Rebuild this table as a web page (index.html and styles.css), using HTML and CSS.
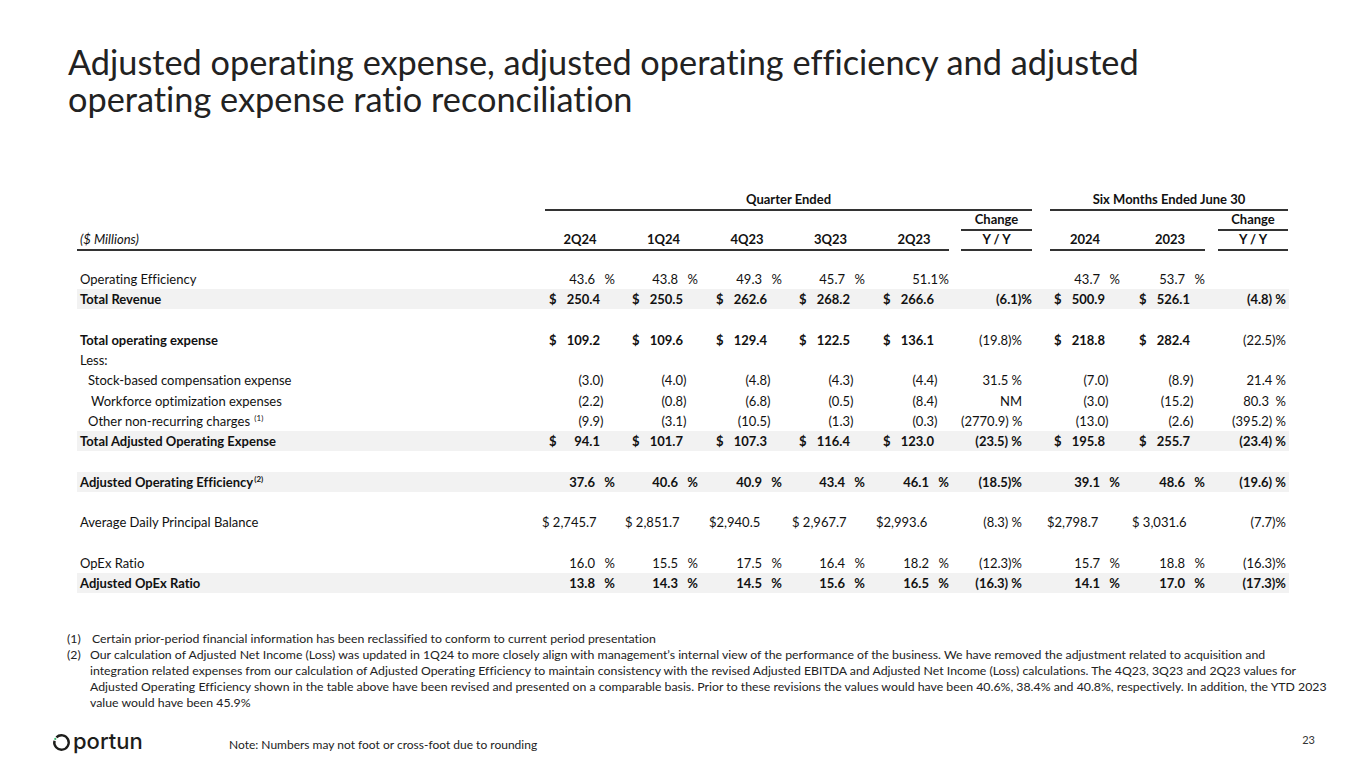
FILE: index.html
```html
<!DOCTYPE html>
<html lang="en">
<head>
<meta charset="utf-8">
<title>Adjusted operating expense reconciliation</title>
<link rel="stylesheet" href="styles.css">
</head>
<body>
<div class="slide">
  <h1 class="title">Adjusted operating expense, adjusted operating efficiency and adjusted<br>operating expense ratio reconciliation</h1>

  <div class="fin">
    <div class="row hrow">
      <div class="grp gq">Quarter Ended</div>
      <div class="grp gs">Six Months Ended June 30</div>
    </div>
    <div class="row hrow">
      <div class="chg c7">Change</div>
      <div class="chg c10">Change</div>
    </div>
    <div class="row hrow h3">
      <div class="lbl ital ulf">($ Millions)</div>
      <div class="ch ulf">2Q24</div>
      <div class="ch ulf">1Q24</div>
      <div class="ch ulf">4Q23</div>
      <div class="ch ulf">3Q23</div>
      <div class="ch"><span class="uc w70">2Q23</span></div>
      <div class="ch"><span class="uc w71">Y / Y</span></div>
      <div class="ch ulf">2024</div>
      <div class="ch"><span class="uc w70">2023</span></div>
      <div class="ch"><span class="uc w70">Y / Y</span></div>
    </div>

    <div class="body">
      <div class="row pct">
        <div class="lbl">Operating Efficiency</div>
        <div class="v"><span class="n">43.6</span><span class="s">%</span></div>
        <div class="v"><span class="n">43.8</span><span class="s">%</span></div>
        <div class="v"><span class="n">49.3</span><span class="s">%</span></div>
        <div class="v"><span class="n">45.7</span><span class="s">%</span></div>
        <div class="v"><span class="n">51.1</span><span class="s tight">%</span></div>
        <div class="y"></div>
        <div class="v"><span class="n">43.7</span><span class="s">%</span></div>
        <div class="v"><span class="n">53.7</span><span class="s">%</span></div>
        <div class="y2"></div>
      </div>
      <div class="row b sh">
        <div class="lbl">Total Revenue</div>
        <div class="v"><span class="c">$</span><span class="n">250.4</span><span class="s"></span></div>
        <div class="v"><span class="c">$</span><span class="n">250.5</span><span class="s"></span></div>
        <div class="v"><span class="c">$</span><span class="n">262.6</span><span class="s"></span></div>
        <div class="v"><span class="c">$</span><span class="n">268.2</span><span class="s"></span></div>
        <div class="v"><span class="c">$</span><span class="n">266.6</span><span class="s"></span></div>
        <div class="y wide">(6.1)%</div>
        <div class="v"><span class="c">$</span><span class="n">500.9</span><span class="s"></span></div>
        <div class="v"><span class="c">$</span><span class="n">526.1</span><span class="s"></span></div>
        <div class="y2">(4.8) %</div>
      </div>
      <div class="row"></div>
      <div class="row b">
        <div class="lbl">Total operating expense</div>
        <div class="v"><span class="c">$</span><span class="n">109.2</span><span class="s"></span></div>
        <div class="v"><span class="c">$</span><span class="n">109.6</span><span class="s"></span></div>
        <div class="v"><span class="c">$</span><span class="n">129.4</span><span class="s"></span></div>
        <div class="v"><span class="c">$</span><span class="n">122.5</span><span class="s"></span></div>
        <div class="v"><span class="c">$</span><span class="n">136.1</span><span class="s"></span></div>
        <div class="y nb">(19.8)%</div>
        <div class="v"><span class="c">$</span><span class="n">218.8</span><span class="s"></span></div>
        <div class="v"><span class="c">$</span><span class="n">282.4</span><span class="s"></span></div>
        <div class="y2 nb">(22.5)%</div>
      </div>
      <div class="row">
        <div class="lbl">Less:</div>
      </div>
      <div class="row">
        <div class="lbl ind">Stock-based compensation expense</div>
        <div class="v"><span class="n">(3.0</span><span class="s p">)</span></div>
        <div class="v"><span class="n">(4.0</span><span class="s p">)</span></div>
        <div class="v"><span class="n">(4.8</span><span class="s p">)</span></div>
        <div class="v"><span class="n">(4.3</span><span class="s p">)</span></div>
        <div class="v"><span class="n">(4.4</span><span class="s p">)</span></div>
        <div class="y">31.5 %</div>
        <div class="v"><span class="n">(7.0</span><span class="s p">)</span></div>
        <div class="v"><span class="n">(8.9</span><span class="s p">)</span></div>
        <div class="y2">21.4 %</div>
      </div>
      <div class="row">
        <div class="lbl ind2">Workforce optimization expenses</div>
        <div class="v"><span class="n">(2.2</span><span class="s p">)</span></div>
        <div class="v"><span class="n">(0.8</span><span class="s p">)</span></div>
        <div class="v"><span class="n">(6.8</span><span class="s p">)</span></div>
        <div class="v"><span class="n">(0.5</span><span class="s p">)</span></div>
        <div class="v"><span class="n">(8.4</span><span class="s p">)</span></div>
        <div class="y">NM</div>
        <div class="v"><span class="n">(3.0</span><span class="s p">)</span></div>
        <div class="v"><span class="n">(15.2</span><span class="s p">)</span></div>
        <div class="y2">80.3  %</div>
      </div>
      <div class="row">
        <div class="lbl ind">Other non-recurring charges <sup>(1)</sup></div>
        <div class="v"><span class="n">(9.9</span><span class="s p">)</span></div>
        <div class="v"><span class="n">(3.1</span><span class="s p">)</span></div>
        <div class="v"><span class="n">(10.5</span><span class="s p">)</span></div>
        <div class="v"><span class="n">(1.3</span><span class="s p">)</span></div>
        <div class="v"><span class="n">(0.3</span><span class="s p">)</span></div>
        <div class="y">(2770.9) %</div>
        <div class="v"><span class="n">(13.0</span><span class="s p">)</span></div>
        <div class="v"><span class="n">(2.6</span><span class="s p">)</span></div>
        <div class="y2">(395.2) %</div>
      </div>
      <div class="row b sh">
        <div class="lbl">Total Adjusted Operating Expense</div>
        <div class="v"><span class="c">$</span><span class="n">94.1</span><span class="s"></span></div>
        <div class="v"><span class="c">$</span><span class="n">101.7</span><span class="s"></span></div>
        <div class="v"><span class="c">$</span><span class="n">107.3</span><span class="s"></span></div>
        <div class="v"><span class="c">$</span><span class="n">116.4</span><span class="s"></span></div>
        <div class="v"><span class="c">$</span><span class="n">123.0</span><span class="s"></span></div>
        <div class="y">(23.5) %</div>
        <div class="v"><span class="c">$</span><span class="n">195.8</span><span class="s"></span></div>
        <div class="v"><span class="c">$</span><span class="n">255.7</span><span class="s"></span></div>
        <div class="y2">(23.4) %</div>
      </div>
      <div class="row"></div>
      <div class="row b sh pct">
        <div class="lbl">Adjusted Operating Efficiency<sup>(2)</sup></div>
        <div class="v"><span class="n">37.6</span><span class="s">%</span></div>
        <div class="v"><span class="n">40.6</span><span class="s">%</span></div>
        <div class="v"><span class="n">40.9</span><span class="s">%</span></div>
        <div class="v"><span class="n">43.4</span><span class="s">%</span></div>
        <div class="v"><span class="n">46.1</span><span class="s">%</span></div>
        <div class="y">(18.5)%</div>
        <div class="v"><span class="n">39.1</span><span class="s">%</span></div>
        <div class="v"><span class="n">48.6</span><span class="s">%</span></div>
        <div class="y2">(19.6) %</div>
      </div>
      <div class="row"></div>
      <div class="row">
        <div class="lbl">Average Daily Principal Balance</div>
        <div class="a">$ 2,745.7</div>
        <div class="a">$ 2,851.7</div>
        <div class="a">$2,940.5</div>
        <div class="a">$ 2,967.7</div>
        <div class="a">$2,993.6</div>
        <div class="y">(8.3) %</div>
        <div class="a">$2,798.7</div>
        <div class="a">$ 3,031.6</div>
        <div class="y2">(7.7)%</div>
      </div>
      <div class="row"></div>
      <div class="row pct">
        <div class="lbl">OpEx Ratio</div>
        <div class="v"><span class="n">16.0</span><span class="s">%</span></div>
        <div class="v"><span class="n">15.5</span><span class="s">%</span></div>
        <div class="v"><span class="n">17.5</span><span class="s">%</span></div>
        <div class="v"><span class="n">16.4</span><span class="s">%</span></div>
        <div class="v"><span class="n">18.2</span><span class="s">%</span></div>
        <div class="y">(12.3)%</div>
        <div class="v"><span class="n">15.7</span><span class="s">%</span></div>
        <div class="v"><span class="n">18.8</span><span class="s">%</span></div>
        <div class="y2">(16.3)%</div>
      </div>
      <div class="row b sh pct">
        <div class="lbl">Adjusted OpEx Ratio</div>
        <div class="v"><span class="n">13.8</span><span class="s">%</span></div>
        <div class="v"><span class="n">14.3</span><span class="s">%</span></div>
        <div class="v"><span class="n">14.5</span><span class="s">%</span></div>
        <div class="v"><span class="n">15.6</span><span class="s">%</span></div>
        <div class="v"><span class="n">16.5</span><span class="s">%</span></div>
        <div class="y">(16.3) %</div>
        <div class="v"><span class="n">14.1</span><span class="s">%</span></div>
        <div class="v"><span class="n">17.0</span><span class="s">%</span></div>
        <div class="y2">(17.3)%</div>
      </div>
    </div>
  </div>

  <div class="notes">
    <div class="note"><span class="nn">(1)</span><span class="nt t1">Certain prior-period financial information has been reclassified to conform to current period presentation</span></div>
    <div class="note"><span class="nn">(2)</span><span class="nt">Our calculation of Adjusted Net Income (Loss) was updated in 1Q24 to more closely align with management’s internal view of the performance of the business. We have removed the adjustment related to acquisition and<br>integration related expenses from our calculation of Adjusted Operating Efficiency to maintain consistency with the revised Adjusted EBITDA and Adjusted Net Income (Loss) calculations. The 4Q23, 3Q23 and 2Q23 values for<br>Adjusted Operating Efficiency shown in the table above have been revised and presented on a comparable basis. Prior to these revisions the values would have been 40.6%, 38.4% and 40.8%, respectively. In addition, the YTD 2023<br>value would have been 45.9%</span></div>
  </div>

  <div class="foot">
    <div class="logo">
      <svg class="logo-o" width="20" height="22" viewBox="0 0 20 22" aria-hidden="true">
        <path d="M 4.4 5.4 A 7.2 7.2 0 1 1 2.5 8.8" fill="none" stroke="#1d1d1b" stroke-width="2.4" stroke-linecap="butt"/>
        <circle cx="3.3" cy="6.9" r="1.1" fill="#3cb371"/>
      </svg>
      <span class="logo-t">portun</span>
    </div>
    <div class="foot-note">Note: Numbers may not foot or cross-foot due to rounding</div>
    <div class="pg">23</div>
  </div>
</div>
</body>
</html>
```

FILE: styles.css
```css
* { box-sizing: border-box; }
html, body { margin: 0; padding: 0; }
body {
  width: 1365px;
  height: 768px;
  overflow: hidden;
  background: #ffffff;
  font-family: Lato, "Open Sans", "Liberation Sans", sans-serif;
  font-variant-ligatures: none;
  font-feature-settings: "liga" 0, "dlig" 0;
  color: #111111;
}
.slide {
  width: 1365px;
  height: 768px;
  padding-top: 43px;
}
.title {
  margin: 0 0 0 68px;
  font-weight: 400;
  font-size: 34.3px;
  line-height: 37px;
  color: #222222;
  letter-spacing: 0;
}

/* table */
.fin {
  margin: 72px 0 0 77px;
  width: 1212px;
  font-size: 13px;
}
.row {
  display: grid;
  grid-template-columns: 468px 83px 84px 83px 84px 82px 89px 85px 83px 71px;
  height: 20.27px;
  line-height: 20px;
  align-items: center;
  white-space: nowrap;
}
.hrow {
  height: 20px;
  align-items: stretch;
  font-weight: 700;
}
.body { margin-top: 19.9px; }

.grp, .chg, .ch {
  display: flex;
  align-items: center;
  justify-content: center;
}
.grp { border-bottom: 2px solid #333; }
.gq { grid-column: 2 / 8; margin-right: 18px; }
.gs { grid-column: 8 / 11; margin-right: 1px; }
.chg { border-bottom: 2px solid #333; }
.c7 { grid-column: 7; margin-right: 18px; }
.c10 { grid-column: 10; margin-right: 1px; }

.h3 .ch { justify-content: flex-start; }
.ulf { border-bottom: 2px solid #333; }
.ch.ulf, .ch .uc { justify-content: center; }
.h3 > .ch.ulf:not(:nth-child(8)) { padding-right: 13px; }
.h3 > .ch:nth-child(8) { padding-right: 15px; }
.uc {
  display: flex;
  align-items: center;
  justify-content: center;
  height: 100%;
  border-bottom: 2px solid #333;
}
.w70 { width: 70px; }
.w71 { width: 71px; }

.lbl { padding-left: 3px; }
.h3 .lbl { display: flex; align-items: center; }
.ital { font-style: italic; font-weight: 400; }
.ind { padding-left: 11px; }
.ind2 { padding-left: 14px; }
sup { font-size: 8px; line-height: 0; vertical-align: 5px; margin-left: 1px; }

.b { font-weight: 700; }
.sh { background: #f2f2f2; }

.v {
  display: flex;
  width: 70px;
}
.c { padding-left: 4px; }
.n { flex: 1; text-align: right; }
.s { width: 15px; }
.s.p { text-align: left; }
.pct .s { width: 20px; text-align: right; }
.pct .s.tight { width: 11px; }

.y, .y2 { text-align: right; white-space: pre; }
.y { padding-right: 28px; }
.y.wide { padding-right: 18px; }
.y.nb, .y2.nb { font-weight: 400; }
.y2 { padding-right: 3px; }
.a { margin-left: -3px; }

/* footnotes */
.notes {
  margin: 38px 0 0 67px;
  font-size: 12.3px;
  line-height: 16px;
  color: #222;
  white-space: nowrap;
}
.note {
  display: grid;
  grid-template-columns: 23px auto;
}
.t1 { padding-left: 2px; }

/* footer */
.foot {
  margin-top: 19px;
  display: flex;
  align-items: center;
  height: 22px;
}
.logo {
  display: flex;
  align-items: center;
  margin-left: 52px;
  width: 177px;
  margin-top: 3px;
}
.logo-o { display: block; }
.logo-t {
  font-family: Inter, "Open Sans", sans-serif;
  font-weight: 500;
  font-size: 22px;
  line-height: 22px;
  color: #1d1d1b;
  letter-spacing: 0;
  margin-top: -3px;
  margin-left: 1px;
}
.foot-note {
  font-size: 12px;
  color: #222;
  margin-top: 7px;
}
.pg {
  margin-left: auto;
  margin-right: 50px;
  font-size: 11px;
  color: #333;
  margin-top: -4px;
}
```
